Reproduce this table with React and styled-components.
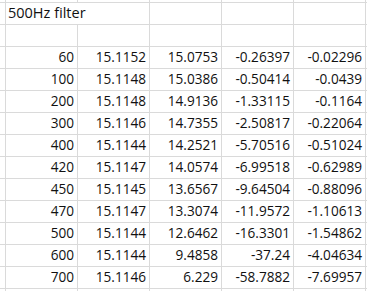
import React from "react";
import styled, { createGlobalStyle } from "styled-components";

const GlobalStyle = createGlobalStyle`
  html, body {
    margin: 0;
    padding: 0;
    background: #ffffff;
  }
`;

const rows = [
  ["60", "15.1152", "15.0753", "-0.26397", "-0.02296"],
  ["100", "15.1148", "15.0386", "-0.50414", "-0.0439"],
  ["200", "15.1148", "14.9136", "-1.33115", "-0.1164"],
  ["300", "15.1146", "14.7355", "-2.50817", "-0.22064"],
  ["400", "15.1144", "14.2521", "-5.70516", "-0.51024"],
  ["420", "15.1147", "14.0574", "-6.99518", "-0.62989"],
  ["450", "15.1145", "13.6567", "-9.64504", "-0.88096"],
  ["470", "15.1147", "13.3074", "-11.9572", "-1.10613"],
  ["500", "15.1144", "12.6462", "-16.3301", "-1.54862"],
  ["600", "15.1144", "9.4858", "-37.24", "-4.04634"],
  ["700", "15.1146", "6.229", "-58.7882", "-7.69957"],
];

const Sheet = styled.div`
  display: grid;
  grid-template-columns: 5px repeat(5, 71px) 1px;
  grid-template-rows: 2px repeat(13, 21px) 2px;
  gap: 1px;
  width: 367px;
  height: 291px;
  overflow: hidden;
  background: #dadada;
  font-family: "Open Sans", "Liberation Sans", sans-serif;
  font-size: 13.6px;
  color: #111111;
`;

const Cell = styled.div`
  background: #ffffff;
  display: flex;
  align-items: flex-end;
  justify-content: flex-end;
  padding: 0 3px 1px 0;
  line-height: 20px;
  white-space: nowrap;
`;

const TitleCell = styled(Cell)`
  grid-column: span 2;
  justify-content: flex-start;
  padding: 0 0 1px 2px;
  font-size: 14.5px;
`;

const EmptyRow = () => (
  <>
    {Array.from({ length: 7 }, (_, i) => (
      <Cell key={i} />
    ))}
  </>
);

const App = () => (
  <>
    <GlobalStyle />
    <Sheet>
      <EmptyRow />

      <Cell />
      <TitleCell>500Hz filter</TitleCell>
      <Cell />
      <Cell />
      <Cell />
      <Cell />

      <EmptyRow />

      {rows.map((row, r) => (
        <React.Fragment key={r}>
          <Cell />
          {row.map((value, c) => (
            <Cell key={c}>{value}</Cell>
          ))}
          <Cell />
        </React.Fragment>
      ))}

      <EmptyRow />
    </Sheet>
  </>
);

export default App;
